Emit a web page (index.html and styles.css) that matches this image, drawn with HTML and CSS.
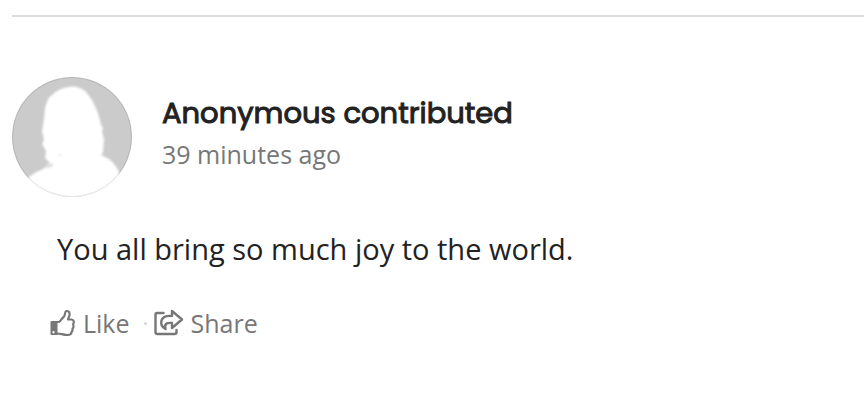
FILE: index.html
```html
<!DOCTYPE html>
<html lang="en">
<head>
<meta charset="utf-8">
<title>Contribution</title>
<link rel="stylesheet" href="styles.css">
</head>
<body>
<article class="post">
  <header class="post-header">
    <svg class="avatar" viewBox="0 0 120 120" aria-hidden="true">
      <defs>
        <clipPath id="disc"><circle cx="60" cy="60" r="60"/></clipPath>
        <filter id="soft"><feGaussianBlur stdDeviation="0.9"/></filter>
      </defs>
      <g clip-path="url(#disc)">
        <rect width="120" height="120" fill="#cbcbcb"/>
        <g filter="url(#soft)">
          <path fill="#fff" d="M60 9.500C64 9.500 70 11 74 15C81 22 87 36 89 48L91 51L90 55L92 62L91 75L89 78C97 81 103 86 107 95L112 130H8L16 101C20 97 26 94 31 92L38 86L33 81L34 74L30 67L32 63L30 54L32 42L33 31L36 22C42 15 50 10 60 9.500Z"/>
          <path d="M33 91L40 86L41 89L35 91Z" fill="#d5d5d5"/>
          <circle cx="48" cy="78" r="1.300" fill="#eaeaea"/>
        </g>
      </g>
      <circle cx="60" cy="60" r="59.500" fill="none" stroke="#000" stroke-opacity=".1"/>
    </svg>
    <div class="byline">
      <h2 class="author">Anonymous contributed</h2>
      <time class="time">39 minutes ago</time>
    </div>
  </header>
  <p class="message">You all bring so much joy to the world.</p>
  <footer class="actions">
    <button class="action" type="button">
      <svg class="icon-like" viewBox="0 0 26 28" aria-hidden="true">
        <path fill="#777" fill-rule="evenodd" d="M1.500 12H7.500V26H1.500Q.500 26 .500 25V13Q.500 12 1.500 12ZM3.500 22a1.200 1.200 0 1 0 .01 0Z"/>
        <path fill="none" stroke="#777" stroke-width="2.200" stroke-linejoin="round" d="M7 13H9C11 12 12 9 14 7.500C15.500 6 14.500 2 16.500 2C20.500 2 20 6 18.500 9L18 10.500H21.500C24 10.500 24.500 13.500 23 15.500C24 17 23.500 19 22.500 19.500C23 21 22 22.500 21.500 23C21.500 25.500 20 26 17.500 26C12.500 26 11 24.500 7 24.500"/>
      </svg>
      <span>Like</span>
    </button>
    <span class="dot" aria-hidden="true"></span>
    <button class="action" type="button">
      <svg class="icon-share" viewBox="0 0 30 28" aria-hidden="true">
        <g fill="none" stroke="#777" stroke-width="2.400" stroke-linejoin="round" stroke-linecap="round">
          <path d="M9.500 4H3Q1.500 4 1.500 5.500V23Q1.500 25 3.500 25H20.500Q22.500 25 22.500 23V21"/>
          <path d="M18 2L28 10.500L18 19V14C13 13.500 10 14.500 11.500 20C8 18 6.500 15 7.500 11.500C9 7 13 6.500 18 7Z"/>
        </g>
      </svg>
      <span>Share</span>
    </button>
  </footer>
</article>
</body>
</html>
```
FILE: styles.css
```css
body {
  margin: 0;
  background: #fff;
  color: #222;
  font-family: "Open Sans", sans-serif;
}

.post {
  margin: 15px 0 0 12px;
  border-top: 2px solid #dcdcdc;
  padding-top: 60px;
}

.post-header {
  display: flex;
  align-items: center;
  gap: 30px;
}

.avatar {
  width: 120px;
  height: 120px;
  flex: none;
}

.byline {
  padding-bottom: 8px;
}

.author {
  margin: 0;
  font: 400 29px/42px Poppins, sans-serif;
  -webkit-text-stroke: 1px #222;
}

.time {
  display: block;
  color: #777;
  font-size: 25px;
  line-height: 40px;
}

.message {
  margin: 32px 0 0 45px;
  font-size: 29px;
  line-height: 40px;
}

.actions {
  display: flex;
  align-items: center;
  margin: 36px 0 0 38px;
}

.action {
  display: flex;
  align-items: center;
  gap: 7px;
  border: 0;
  padding: 0;
  background: none;
  color: #777;
  font: 25px/36px "Open Sans", sans-serif;
}

.icon-like {
  width: 26px;
  height: 28px;
}

.icon-share {
  width: 30px;
  height: 28px;
}

.dot {
  width: 3px;
  height: 3px;
  margin: 0 7px 0 14px;
  border-radius: 50%;
  background: #d5d5d5;
}
```
